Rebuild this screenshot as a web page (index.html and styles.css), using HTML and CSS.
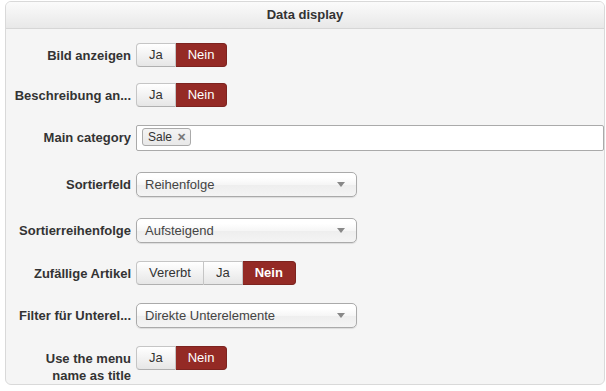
FILE: index.html
```html
<!DOCTYPE html>
<html lang="de">
<head>
    <meta charset="UTF-8">
    <meta name="viewport" content="width=device-width, initial-scale=1.0">
    <title>Data display</title>
    <link rel="stylesheet" href="styles.css">
</head>
<body>
    <div class="panel">
        <div class="panel-header">Data display</div>

        <div class="panel-body">
            <div class="row row-tight">
                <label class="row-label">Bild anzeigen</label>
                <div class="btn-group">
                    <span class="btn">Ja</span>
                    <span class="btn btn-active">Nein</span>
                </div>
            </div>

            <div class="row">
                <label class="row-label" title="Beschreibung anzeigen">Beschreibung an...</label>
                <div class="btn-group">
                    <span class="btn">Ja</span>
                    <span class="btn btn-active">Nein</span>
                </div>
            </div>

            <div class="row row-loose">
                <label class="row-label">Main category</label>
                <div class="tag-input">
                    <span class="tag">Sale <span class="tag-close">&#10005;</span></span>
                </div>
            </div>

            <div class="row row-loose">
                <label class="row-label">Sortierfeld</label>
                <div class="select">
                    <span>Reihenfolge</span>
                    <span class="select-arrow"></span>
                </div>
            </div>

            <div class="row">
                <label class="row-label">Sortierreihenfolge</label>
                <div class="select">
                    <span>Aufsteigend</span>
                    <span class="select-arrow"></span>
                </div>
            </div>

            <div class="row">
                <label class="row-label">Zufällige Artikel</label>
                <div class="btn-group">
                    <span class="btn">Vererbt</span>
                    <span class="btn">Ja</span>
                    <span class="btn btn-active btn-bold">Nein</span>
                </div>
            </div>

            <div class="row">
                <label class="row-label" title="Filter für Unterelemente">Filter für Unterel...</label>
                <div class="select">
                    <span>Direkte Unterelemente</span>
                    <span class="select-arrow"></span>
                </div>
            </div>

            <div class="row">
                <label class="row-label row-label-wrap">Use the menu name as title</label>
                <div class="btn-group">
                    <span class="btn">Ja</span>
                    <span class="btn btn-active">Nein</span>
                </div>
            </div>
        </div>
    </div>
</body>
</html>
```

FILE: styles.css
```css
body {
    font-family: 'Liberation Sans', Arial, sans-serif;
    font-size: 13px;
    color: #333;
    background-color: #ffffff;
    margin: 0;
    padding: 1px 2px 0 5px;
}

.panel {
    width: 598px;
    border: 1px solid #d9d9d9;
    border-radius: 6px;
    background-color: #f5f5f5;
    overflow: hidden;
}

.panel-header {
    height: 26px;
    line-height: 26px;
    text-align: center;
    font-weight: bold;
    background: linear-gradient(#fbfbfb, #e8e8e8);
    border-bottom: 1px solid #d6d6d6;
}

.panel-body {
    padding: 14px 0 0 6px;
}

.row {
    display: flex;
    align-items: flex-start;
    margin-bottom: 18px;
}

.row:last-child {
    margin-bottom: 0;
}

.row-tight {
    margin-bottom: 16px;
}

.row-loose {
    margin-bottom: 21px;
}

.row-label {
    width: 119px;
    margin-right: 5px;
    padding-top: 4px;
    line-height: 18px;
    text-align: right;
    font-weight: bold;
    white-space: nowrap;
    overflow: hidden;
}

.row-label-wrap {
    white-space: normal;
    line-height: 17px;
}

/* Ja / Nein Schalter */
.btn-group {
    display: flex;
}

.btn {
    height: 22px;
    line-height: 22px;
    padding: 0 12px;
    border: 1px solid #c5c5c5;
    border-bottom-color: #b0b0b0;
    background: linear-gradient(#ffffff, #e6e6e6);
    color: #333;
}

.btn + .btn {
    border-left: none;
}

.btn:first-child {
    border-radius: 4px 0 0 4px;
}

.btn:last-child {
    border-radius: 0 4px 4px 0;
}

.btn-active {
    background: #942a25;
    border-color: #7c231f;
    color: #ffffff;
}

.btn-bold {
    font-weight: bold;
}

/* Auswahlfelder */
.select {
    width: 203px;
    height: 23px;
    line-height: 23px;
    padding: 0 8px;
    display: flex;
    justify-content: space-between;
    align-items: center;
    border: 1px solid #aaa;
    border-radius: 5px;
    background: linear-gradient(#ffffff 20%, #f6f6f6 50%, #eeeeee 52%, #f4f4f4 100%);
    box-shadow: 0 1px 1px rgba(0, 0, 0, 0.1);
    color: #444;
}

.select-arrow {
    width: 0;
    height: 0;
    margin-right: 3px;
    border-left: 4px solid transparent;
    border-right: 4px solid transparent;
    border-top: 5px solid #888;
}

.tag-input {
    flex: 1;
    height: 26px;
    box-sizing: border-box;
    border: 1px solid #aaa;
    border-radius: 2px;
    background-color: #ffffff;
    padding: 2px 0 0 5px;
}

.tag {
    display: inline-block;
    height: 16px;
    line-height: 16px;
    padding: 0 4px 0 5px;
    border: 1px solid #aaa;
    border-radius: 3px;
    background: linear-gradient(#f4f4f4, #e8e8e8);
    font-size: 12px;
    color: #333;
}

.tag-close {
    color: #777;
    font-weight: bold;
    font-size: 11px;
    margin-left: 2px;
}
```
